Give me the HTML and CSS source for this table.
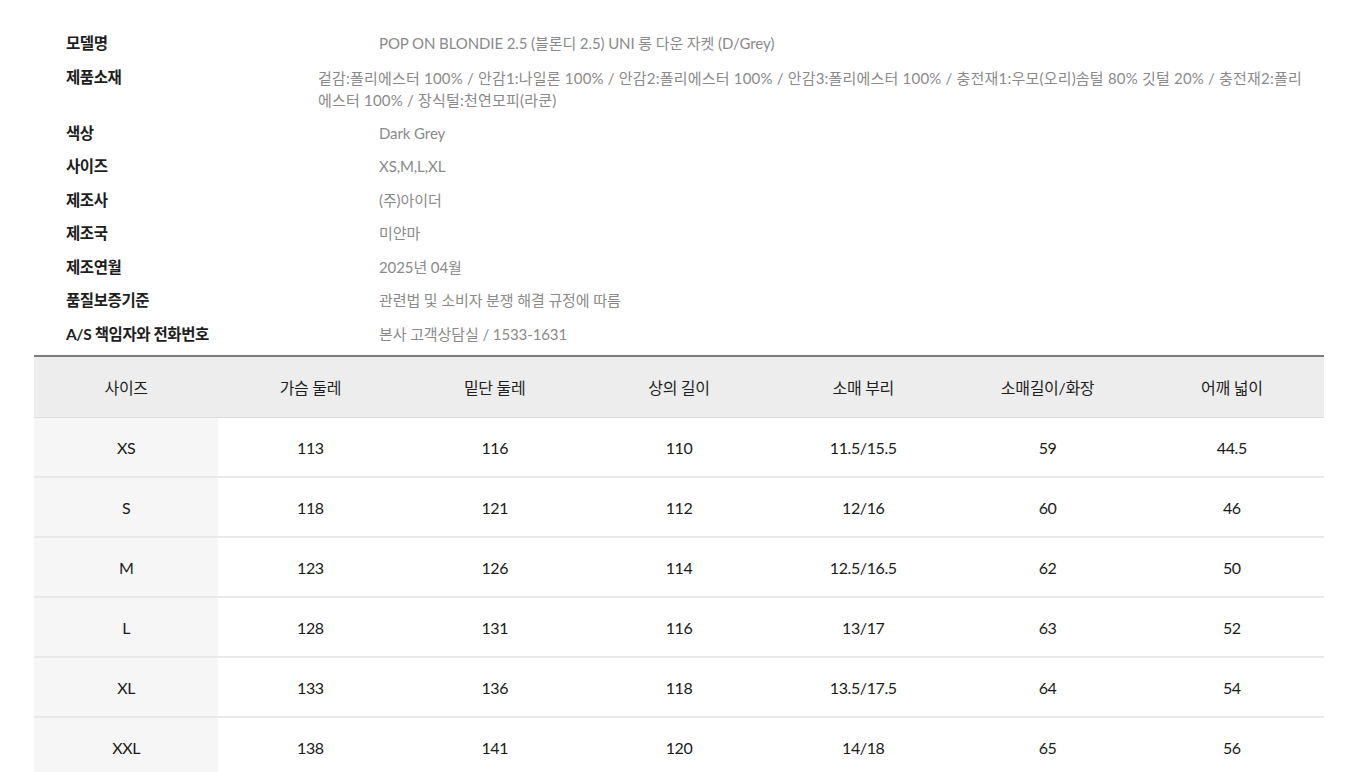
FILE: index.html
```html
<!DOCTYPE html>
<html lang="ko">
<head>
<meta charset="utf-8">
<title>상품정보</title>
<link rel="stylesheet" href="styles.css">
</head>
<body>
<div class="page">
  <div class="info">
    <div class="row"><div class="label">모델명</div><div class="value">POP ON BLONDIE 2.5 (블론디 2.5) UNI 롱 다운 자켓 (D/Grey)</div></div>
    <div class="row"><div class="label">제품소재</div><div class="value value-wide">겉감:폴리에스터 100% / 안감1:나일론 100% / 안감2:폴리에스터 100% / 안감3:폴리에스터 100% / 충전재1:우모(오리)솜털 80% 깃털 20% / 충전재2:폴리<br>에스터 100% / 장식털:천연모피(라쿤)</div></div>
    <div class="row"><div class="label">색상</div><div class="value">Dark Grey</div></div>
    <div class="row"><div class="label">사이즈</div><div class="value">XS,M,L,XL</div></div>
    <div class="row"><div class="label">제조사</div><div class="value">(주)아이더</div></div>
    <div class="row"><div class="label">제조국</div><div class="value">미얀마</div></div>
    <div class="row"><div class="label">제조연월</div><div class="value">2025년 04월</div></div>
    <div class="row"><div class="label">품질보증기준</div><div class="value">관련법 및 소비자 분쟁 해결 규정에 따름</div></div>
    <div class="row"><div class="label">A/S 책임자와 전화번호</div><div class="value">본사 고객상담실 / 1533-1631</div></div>
  </div>
  <table class="sizes">
    <thead>
      <tr><th>사이즈</th><th>가슴 둘레</th><th>밑단 둘레</th><th>상의 길이</th><th>소매 부리</th><th>소매길이/화장</th><th>어깨 넓이</th></tr>
    </thead>
    <tbody>
      <tr><td class="sz">XS</td><td>113</td><td>116</td><td>110</td><td>11.5/15.5</td><td>59</td><td>44.5</td></tr>
      <tr><td class="sz">S</td><td>118</td><td>121</td><td>112</td><td>12/16</td><td>60</td><td>46</td></tr>
      <tr><td class="sz">M</td><td>123</td><td>126</td><td>114</td><td>12.5/16.5</td><td>62</td><td>50</td></tr>
      <tr><td class="sz">L</td><td>128</td><td>131</td><td>116</td><td>13/17</td><td>63</td><td>52</td></tr>
      <tr><td class="sz">XL</td><td>133</td><td>136</td><td>118</td><td>13.5/17.5</td><td>64</td><td>54</td></tr>
      <tr><td class="sz">XXL</td><td>138</td><td>141</td><td>120</td><td>14/18</td><td>65</td><td>56</td></tr>
    </tbody>
  </table>
</div>
</body>
</html>
```

FILE: styles.css
```css
html, body {
  margin: 0;
  padding: 0;
  background: #ffffff;
}
body {
  font-family: Lato, "Noto Sans CJK KR", sans-serif;
  color: #222;
}
.page {
  width: 1290px;
  margin-left: 34px;
  padding-top: 27px;
}
.info {
  padding-left: 32px;
  padding-bottom: 4px;
}
.row {
  display: flex;
  padding: 6px 0;
  font-size: 15px;
  line-height: 21.5px;
}
.label {
  width: 252px;
  flex: none;
  font-weight: 700;
  font-size: 15.5px;
  color: #1e1e1e;
  letter-spacing: -0.4px;
}
.value {
  flex: 1;
  padding-left: 61px;
  color: #8a8a8a;
  letter-spacing: -0.1px;
}
.value-wide {
  padding-left: 0;
  line-height: 22px;
  letter-spacing: 0.2px;
  white-space: nowrap;
}
.sizes {
  width: 100%;
  border-collapse: collapse;
  table-layout: fixed;
  border-top: 2px solid #7c7c7c;
  font-size: 16px;
}
.sizes th {
  height: 60px;
  padding: 0;
  background: #ededed;
  font-weight: 400;
  color: #1e1e1e;
  text-align: center;
  border-bottom: 1px solid #dcdcdc;
  letter-spacing: -0.3px;
}
.sizes td {
  height: 58px;
  padding: 0;
  text-align: center;
  color: #1a1a1a;
  letter-spacing: -0.4px;
  border-bottom: 2px solid #e9e9e9;
}
.sizes td.sz {
  background: #f6f6f6;
}
.sizes tbody tr:last-child td {
  border-bottom: none;
}
```
